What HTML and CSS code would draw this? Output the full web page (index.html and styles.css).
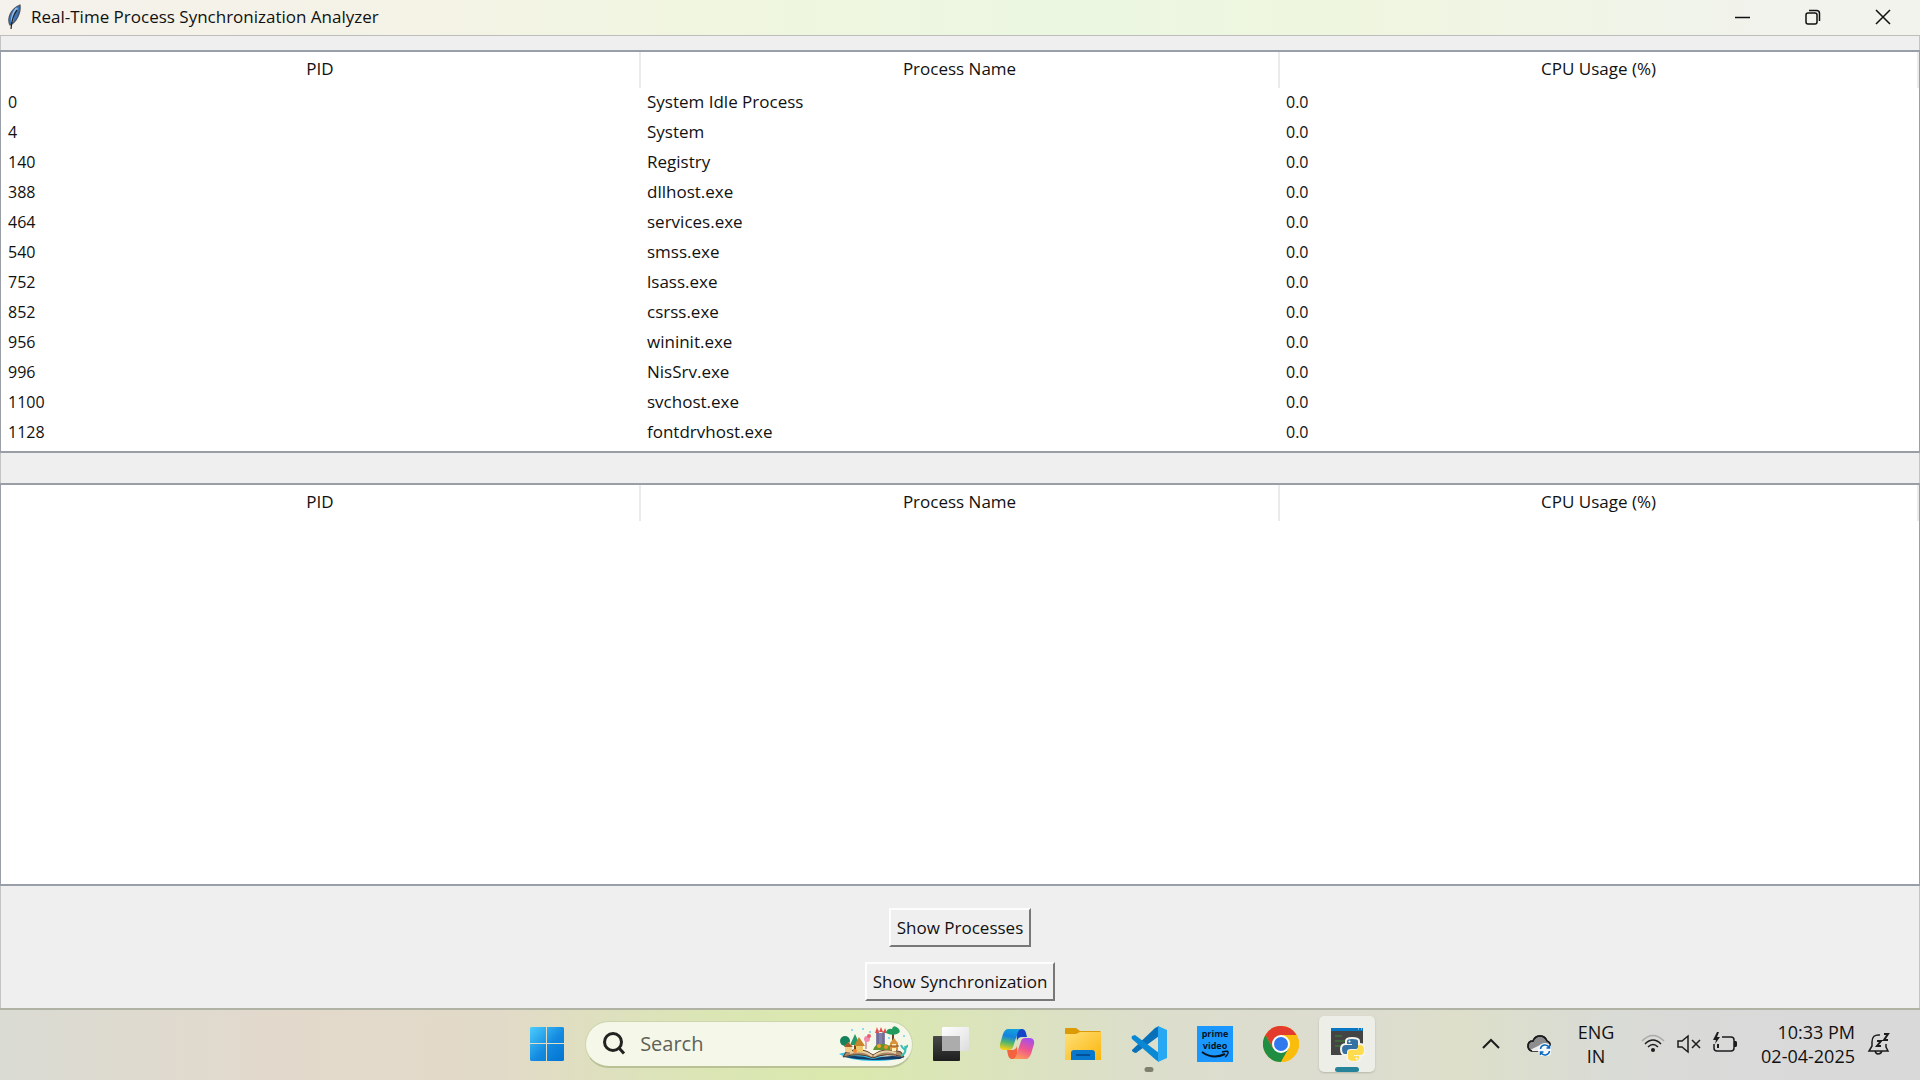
FILE: index.html
```html
<!DOCTYPE html>
<html lang="en">
<head>
<meta charset="utf-8">
<title>Real-Time Process Synchronization Analyzer</title>
<link rel="stylesheet" href="styles.css">
</head>
<body>
<header class="titlebar">
  <svg class="feather" viewBox="0 0 16 26" aria-hidden="true">
    <path d="M4 21C1 15 4 5 14 1C15 8 11 18 4 21Z" fill="#3b74b9" stroke="#4b535d" stroke-width="1.2"/>
    <path d="M11 4Q6 10 6 18" fill="none" stroke="#8dbcf0" stroke-width="2.500"/>
    <path d="M11 6Q6 12 5 25" fill="none" stroke="#222" stroke-width="1.2"/>
  </svg>
  <h1 class="title">Real-Time Process Synchronization Analyzer</h1>
  <div class="controls">
    <button class="control" aria-label="Minimize"><svg viewBox="0 0 16 16"><path d="M0 8.5H15"/></svg></button>
    <button class="control" aria-label="Restore"><svg viewBox="0 0 16 16"><rect x="1" y="4" width="11" height="11" rx="2"/><path d="M4 1.500H11.500Q14.500 1.500 14.500 4.500V12"/></svg></button>
    <button class="control" aria-label="Close"><svg viewBox="0 0 16 16"><path d="M1 1L15 15M15 1L1 15"/></svg></button>
  </div>
</header>
<main class="app">
  <div class="panel">
    <table class="tree">
      <thead><tr><th>PID</th><th>Process Name</th><th>CPU Usage (%)</th></tr></thead>
      <tbody>
        <tr><td>0</td><td class="name">System Idle Process</td><td>0.0</td></tr>
        <tr><td>4</td><td class="name">System</td><td>0.0</td></tr>
        <tr><td>140</td><td class="name">Registry</td><td>0.0</td></tr>
        <tr><td>388</td><td class="name">dllhost.exe</td><td>0.0</td></tr>
        <tr><td>464</td><td class="name">services.exe</td><td>0.0</td></tr>
        <tr><td>540</td><td class="name">smss.exe</td><td>0.0</td></tr>
        <tr><td>752</td><td class="name">lsass.exe</td><td>0.0</td></tr>
        <tr><td>852</td><td class="name">csrss.exe</td><td>0.0</td></tr>
        <tr><td>956</td><td class="name">wininit.exe</td><td>0.0</td></tr>
        <tr><td>996</td><td class="name">NisSrv.exe</td><td>0.0</td></tr>
        <tr><td>1100</td><td class="name">svchost.exe</td><td>0.0</td></tr>
        <tr><td>1128</td><td class="name">fontdrvhost.exe</td><td>0.0</td></tr>
      </tbody>
    </table>
  </div>
  <div class="panel">
    <table class="tree">
      <thead><tr><th>PID</th><th>Process Name</th><th>CPU Usage (%)</th></tr></thead>
      <tbody></tbody>
    </table>
  </div>
  <div class="actions">
    <button class="action">Show Processes</button>
    <button class="action">Show Synchronization</button>
  </div>
</main>
<footer class="taskbar">
  <div class="apps">
    <button class="task" aria-label="Start">
      <svg viewBox="0 0 36 36">
        <defs><linearGradient id="win" x1="0" y1="0" x2="36" y2="36" gradientUnits="userSpaceOnUse"><stop offset="0" stop-color="#4fd0ff"/><stop offset=".55" stop-color="#138ae0"/><stop offset="1" stop-color="#0072d0"/></linearGradient></defs>
        <path fill="url(#win)" d="M2 1H17V17H1V2ZM18 1H34L35 2V17H18ZM1 18H17V35H2L1 34ZM18 18H35V34L34 35H18Z"/>
      </svg>
    </button>
    <label class="search">
      <svg class="lens" viewBox="0 0 24 24"><circle cx="11" cy="10" r="8.500"/><path d="M17 16L22 21.500"/></svg>
      <input class="search-input" type="search" placeholder="Search" aria-label="Search">
      <svg class="storybook" viewBox="0 0 70 36" aria-hidden="true">
        <path d="M1 28Q10 24 35 29T66 29Q62 35 34 35Q12 35 1 28Z" fill="#35c4ea"/>
        <path d="M6 31Q20 28 35 33Q50 28 66 31L62 33Q48 34 35 34Q20 34 6 31Z" fill="#123b67"/>
        <path d="M8 26Q24 20 35 29Q47 20 63 26L66 31Q48 26 35 32Q22 26 5 31Z" fill="#a98966" stroke="#5b3a27"/>
        <path d="M12 27Q25 23 34 30M58 27Q45 23 36 30" fill="none" stroke="#e6cfa6" stroke-width="2"/>
        <path d="M38 7H47V24H38Z" fill="#8582aa"/><path d="M40 4V21M45 5V20" stroke="#5e5b87"/>
        <path d="M37 7L39 1L41 7ZM41 6L43 1L45 6ZM45 7L47 2L49 7Z" fill="#e84c48"/>
        <path d="M35 24Q37 17 44 18Q52 17 53 24Z" fill="#62942d"/>
        <circle cx="41" cy="20" r="2" fill="#f2a42d"/><circle cx="48" cy="21" r="2" fill="#ef8e2c"/>
        <path d="M55 8V18" stroke="#6f4420" stroke-width="2"/>
        <path d="M48 7Q49 2 54 3Q55-2 60 2Q64 6 59 8Q53 10 48 7Z" fill="#219c5e"/>
        <path d="M52 17L56 12L60 17V24H52Z" fill="#d9933d"/><path d="M54 18H58V20H54ZM54 22H58V25H54Z" fill="#fff0b8"/><path d="M51 20H61" stroke="#8d4d22"/>
        <path d="M17 24V13M8 20V25" stroke="#71441f" stroke-width="2"/>
        <path d="M17 8L12 19H22Z" fill="#249b6a"/><circle cx="7" cy="15" r="5" fill="#16825b"/>
        <path d="M7 20L11 16L14 20V26H7Z" fill="#f1cf89"/><path d="M6 21L10 16L15 21Z" fill="#a75b29"/>
        <path d="M16 20L21 11L27 20Z" fill="#c7842b"/><path d="M18 20H25V26H18Z" fill="#edc66a"/>
        <path d="M28 13V23" stroke="#b65d76"/><circle cx="29" cy="13" r="3" fill="#f28bae"/><circle cx="31" cy="10" r="2" fill="#e3616f"/><circle cx="17" cy="25" r="2" fill="#f08a2c"/>
        <path d="M63 30Q69 27 67 20M67 24Q64 22 63 19M67 23L70 19" fill="none" stroke="#39bfb5" stroke-width="2"/>
        <path d="M13 4H15M24 3H26M31 6H33M50 12H52M65 10H67" stroke="#8edcf1" stroke-width="2"/>
      </svg>
    </label>
    <button class="task" aria-label="Task view">
      <svg viewBox="0 0 36 36">
        <defs><linearGradient id="tvd" x2="0" y2="1"><stop stop-color="#484848"/><stop offset="1" stop-color="#1e1e1e"/></linearGradient><linearGradient id="tvl" x2="1" y2="1"><stop stop-color="#fff"/><stop offset="1" stop-color="#ddd"/></linearGradient></defs>
        <rect y="10" width="27" height="25" rx="1" fill="url(#tvd)"/><rect x="9" y="1" width="27" height="24" rx="1" fill="url(#tvl)"/><path d="M9 10H27V25H10L9 24Z" fill="#acacac"/>
      </svg>
    </button>
    <button class="task" aria-label="Copilot">
      <svg viewBox="0 0 36 36">
        <defs>
          <linearGradient id="cpa" x1=".5" y1="0" x2=".3" y2="1"><stop stop-color="#14a0dc"/><stop offset=".35" stop-color="#1483e0"/><stop offset=".65" stop-color="#53b66a"/><stop offset="1" stop-color="#ffcf14"/></linearGradient>
          <linearGradient id="cpb" x1=".7" y1="0" x2=".3" y2="1"><stop stop-color="#a44df0"/><stop offset=".5" stop-color="#ee5590"/><stop offset="1" stop-color="#ff9a58"/></linearGradient>
        </defs>
        <path d="M17 3H23Q26 3 27 7L28 11H23Q19 11 18 15Z" fill="#1546c8"/>
        <path d="M19 33H13Q10 33 9 29L8 24H13Q17 24 18 20Z" fill="#f3633f"/>
        <path d="M9 3H22Q19 4 18 9L14 21Q13 24 10 24H5Q0 24 1 18L4 8Q6 3 9 3Z" fill="url(#cpa)"/>
        <path d="M27 33H14Q17 32 18 27L22 15Q23 12 26 12H30Q36 12 35 18L32 28Q30 33 27 33Z" fill="url(#cpb)"/>
      </svg>
    </button>
    <button class="task" aria-label="File Explorer">
      <svg viewBox="0 0 36 36">
        <defs><linearGradient id="fol" x2="1" y2="1"><stop stop-color="#ffe078"/><stop offset="1" stop-color="#fbb50c"/></linearGradient></defs>
        <path d="M0 3Q0 2 1 2H11L15 5H35L36 6V10H0Z" fill="#dc9a06"/><path d="M0 8H11L15 6H36V34H0Z" fill="url(#fol)"/>
        <path d="M6 34V27Q6 24 9 24H27Q30 24 30 27V34Z" fill="#0878cc"/><path d="M11 29H25" stroke="#034f98" stroke-width="2"/>
      </svg>
    </button>
    <button class="task running" aria-label="Visual Studio Code">
      <svg viewBox="0 0 36 36">
        <path d="M1 24L24 2L28 0V10L5 27Q3 27 1 25Z" fill="#0870b8"/><path d="M1 10L4 9L28 27V36L25 34L1 13Q0 12 1 10Z" fill="#0b88d4"/><path d="M27 0L36 4V32L27 36Z" fill="#28a8f2"/>
      </svg>
    </button>
    <button class="task" aria-label="Prime Video">
      <svg viewBox="0 0 36 36">
        <rect width="36" height="36" fill="#1a98ff"/>
        <text class="prime" x="18" y="11" text-anchor="middle">prime</text><text class="prime" x="18" y="23" text-anchor="middle">video</text>
        <path d="M5 26Q16 34 28 28" fill="none" stroke="#06131f" stroke-width="2"/><path d="M25 26Q32 24 31 27Q30 30 28 31" fill="none" stroke="#06131f" stroke-width="1.400"/>
      </svg>
    </button>
    <button class="task" aria-label="Google Chrome">
      <svg viewBox="0 0 36 36">
        <circle cx="18" cy="18" r="18" fill="#fbbd0b"/>
        <path d="M18 9H33.600A18 18 0 0 0 2.400 9L10.200 22.500Z" fill="#e33b2e"/>
        <path d="M2.400 9A18 18 0 0 0 18 36L25.800 22.500L10.200 22.500Z" fill="#1f8e42"/>
        <path d="M18 9H33.600A18 18 0 0 1 18 36L25.800 22.500Z" fill="#fbbd0b"/>
        <circle cx="18" cy="18" r="9" fill="#fff"/><circle cx="18" cy="18" r="7" fill="#2f78ed"/>
      </svg>
    </button>
    <button class="task active" aria-label="Python">
      <svg viewBox="0 0 36 36">
        <rect x="2" y="2" width="32" height="27" fill="#444"/><rect x="2" y="2" width="32" height="3" fill="#0878c4"/><path d="M29 3H30M32 3H33" stroke="#d8eaff"/><path d="M6 10H13M6 15H19M6 20H14" stroke="#3a8a35"/>
        <g stroke="#f4f4ee" stroke-width="4" fill="none"><path d="M18 15Q18 13 23 13Q29 13 29 15V21Q29 23 26 23H22Q18 23 18 26V28H16Q13 28 13 23Q13 19 17 19H23V18H18Z"/><path d="M29 19H31Q35 19 35 24Q35 29 31 29H25V30H30V32Q30 35 25 35Q19 35 19 32V26Q19 24 22 24H26Q29 24 29 21Z"/></g>
        <path d="M18 15Q18 13 23 13Q29 13 29 15V21Q29 23 26 23H22Q18 23 18 26V28H16Q13 28 13 23Q13 19 17 19H23V18H18Z" fill="#3571a3"/>
        <path d="M29 19H31Q35 19 35 24Q35 29 31 29H25V30H30V32Q30 35 25 35Q19 35 19 32V26Q19 24 22 24H26Q29 24 29 21Z" fill="#ffdc4e"/>
        <circle cx="20.500" cy="15.500" r="1" fill="#fff"/><circle cx="27.500" cy="32.500" r="1" fill="#fff"/>
      </svg>
    </button>
  </div>
  <div class="tray">
    <button class="tray-button" aria-label="Show hidden icons"><svg viewBox="0 0 24 24"><path d="M4 16L12 8L20 16" stroke-width="2"/></svg></button>
    <button class="tray-button cloud" aria-label="OneDrive"><svg viewBox="0 0 24 24">
      <path d="M5 19Q1 18 1 14Q1 9 6 9Q8 4 13 4Q18 4 20 9Q24 10 23 15L20 19Z" fill="#8d8d90"/><path d="M3 18L15 12L20 19H5Z" fill="#ededed" stroke="none"/><path d="M5 19Q1 18 1 14Q1 9 6 9Q8 4 13 4Q18 4 20 9"/>
      <circle cx="18" cy="18" r="7" fill="#f6f9fc" stroke="none"/><path d="M13.500 17A4.500 4.500 0 0 1 22 15.500M22.500 19A4.500 4.500 0 0 1 14 20.500M22.500 13V16H19.500M13.500 23V20H16.500" stroke="#0968bd"/>
    </svg></button>
    <button class="language" aria-label="Language: English, India">ENG<br>IN</button>
    <button class="status" aria-label="Network, volume, battery">
      <svg viewBox="0 0 24 24"><path d="M1 9Q12-2 23 9" stroke="#aaa"/><path d="M4 12Q12 4 20 12M7 15Q12 10 17 15"/><circle cx="12" cy="18" r="2" fill="#1c1c1c" stroke="none"/></svg>
      <svg viewBox="0 0 24 24"><path d="M1 9H5L11 4V20L5 15H1ZM15 8L23 16M23 8L15 16"/></svg>
      <svg viewBox="0 0 24 24"><path d="M9 5H18Q21 5 21 8V16Q21 19 18 19H4Q1 19 1 16V12"/><path d="M21 9H23L24 10V14L23 15H21ZM4 0L0 8H3L2 12L7 5H4L6 0Z" fill="#1c1c1c" stroke="none"/><path d="M5 12V16" stroke-width="2"/></svg>
    </button>
    <button class="clock">10:33 PM<br>02-04-2025</button>
    <button class="tray-button bell" aria-label="Notifications: do not disturb"><svg viewBox="0 0 24 24"><path d="M13 3Q5 2 5 10V14L2 19H21L19 15V12M8 19Q9 22 11 22Q14 22 15 19"/><path d="M10 9H14L10 14H14M17 2H21L17 8H21" stroke-width="2"/></svg></button>
  </div>
</footer>
</body>
</html>
```
FILE: styles.css
```css
* { box-sizing: border-box; }
body {
  margin: 0;
  min-height: 100vh;
  display: flex;
  flex-direction: column;
  font-family: "Open Sans", "Noto Sans", sans-serif;
  font-size: 17px;
  line-height: 24px;
  color: #111;
}
button { font: inherit; color: inherit; background: none; border: 0; padding: 0; }
svg { display: block; }

.titlebar {
  height: 36px;
  display: flex;
  align-items: center;
  padding: 0 2px 2px 6px;
  border-bottom: 1px solid #bdbdbb;
  background: linear-gradient(90deg, #f5f1ec, #f4f3e6 22%, #f0f6df 38%, #ebf7e1 56%, #eff6df 70%, #f1f3ec 92%);
}
.feather { width: 16px; height: 26px; }
.title { margin: 0 auto 0 9px; font-size: 17px; font-weight: 400; }
.controls { display: flex; }
.control { width: 70px; height: 32px; display: grid; place-items: center; }
.control svg { width: 16px; height: 16px; fill: none; stroke: #111; stroke-width: 1.5; }

.app {
  flex: 1;
  display: grid;
  grid-template-rows: 1fr 1fr auto;
  gap: 30px;
  padding-top: 14px;
  background: #efefef;
  border: 1px solid #c4c4c4;
  border-width: 0 1px;
}
.panel { background: #fff; border: 2px solid #9a9ea6; border-width: 2px 1px; margin: 0 -1px; }
.tree { width: 100%; table-layout: fixed; border-collapse: collapse; }
.tree th { height: 36px; padding: 0 0 2px; font-weight: 400; border-right: 2px solid #ebebeb; }
.tree td { height: 30px; padding: 0 7px 2px; font-size: 16px; }
.tree .name { font-size: 17px; }
.actions {
  display: flex;
  flex-direction: column;
  align-items: center;
  gap: 15px;
  margin-top: -8px;
  padding-bottom: 7px;
}
.action {
  height: 39px;
  padding: 0 6px;
  border: 2px solid;
  border-color: #fdfdfd #787878 #787878 #fdfdfd;
  background: #efefef;
}

.taskbar {
  height: 72px;
  display: grid;
  grid-template-columns: 27% auto 1fr;
  align-items: center;
  padding: 0 0 2px 1px;
  border-top: 2px solid #b0b2a4;
  background: linear-gradient(90deg, #dadbd3, #e2d9cc 14%, #e2dac8 26%, #dbe5b6 36%, #dae9ad 44%, #dbe3bd 52%, #dcdecc 60%, #dcdcd0 70%, #dddfca 76%, #d9dbd6 84%, #d9d9da 94%);
}
.apps { grid-column: 2; display: flex; align-items: center; gap: 10px; }
.task { position: relative; width: 56px; height: 56px; display: grid; place-items: center; border-radius: 5px; }
.task svg { width: 36px; height: 36px; }
.task.active { background: #eeeee8; box-shadow: 0 1px 2px #b8b8a8; }
.task.running::after, .task.active::after {
  content: "";
  position: absolute;
  bottom: 0;
  left: 50%;
  transform: translateX(-50%);
  width: 24px;
  height: 5px;
  border-radius: 3px;
  background: #26839a;
}
.task.running::after { width: 9px; background: #80806f; }
.prime { font: 700 9px "Open Sans", sans-serif; fill: #06131f; }
.search {
  width: 328px;
  height: 47px;
  display: flex;
  align-items: center;
  padding: 0 4px 0 16px;
  border: 1px solid #cdd5ae;
  border-bottom: 2px solid #b9c195;
  border-radius: 24px;
  background: #f5f7e8;
}
.lens { width: 24px; height: 24px; fill: none; stroke: #222; stroke-width: 3; }
.search-input {
  flex: 1;
  min-width: 0;
  margin-left: 14px;
  padding: 0;
  border: 0;
  outline: 0;
  background: none;
  font: 20px "Open Sans", sans-serif;
}
.search-input::placeholder { color: #5f6158; opacity: 1; }
.storybook { width: 70px; height: 36px; }

.tray { grid-column: 3; display: flex; align-items: center; justify-content: flex-end; padding-right: 29px; }
.tray svg { width: 24px; height: 24px; fill: none; stroke: #1c1c1c; stroke-width: 1.5; }
.cloud { margin-left: 24px; }
.language { width: 50px; margin-left: 20px; text-align: center; font-size: 18px; }
.status { display: flex; gap: 12px; margin-left: 20px; }
.clock { width: 104px; margin-left: 14px; text-align: right; font-size: 18px; }
.bell { margin-left: 12px; }
```
